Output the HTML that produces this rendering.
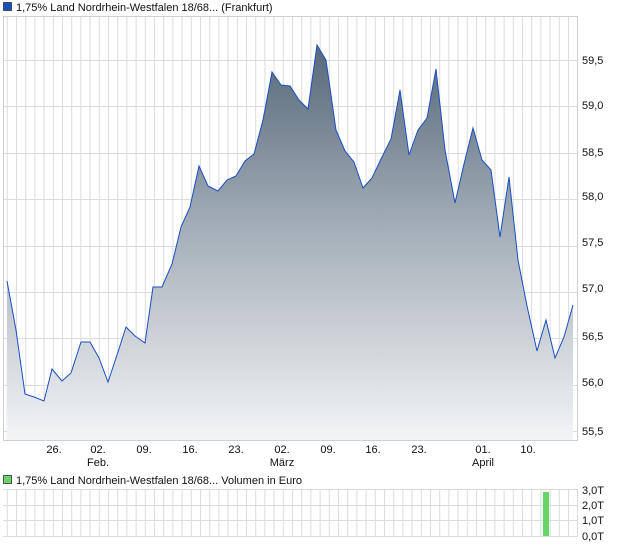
<!DOCTYPE html>
<html><head><meta charset="utf-8"><style>
html,body{margin:0;padding:0;background:#fff;}
svg{display:block;font-family:"Liberation Sans",sans-serif;}
</style></head><body>
<svg width="620" height="546" viewBox="0 0 620 546" xmlns="http://www.w3.org/2000/svg">
<defs>
<pattern id="vg" x="6.8" y="0" width="9.2" height="600" patternUnits="userSpaceOnUse">
<rect x="0" y="0" width="1" height="600" fill="#dcdcdc"/>
</pattern>
<linearGradient id="fg" x1="0" y1="0" x2="0" y2="1">
<stop offset="0" stop-color="#56687a"/>
<stop offset="0.5" stop-color="#a9b3bc"/>
<stop offset="1" stop-color="#f3f4f6"/>
</linearGradient>
</defs>
<rect x="3" y="16" width="575" height="425" fill="url(#vg)"/>
<g stroke="#dcdcdc" stroke-width="1">
<line x1="3" y1="60.5" x2="578" y2="60.5"/>
<line x1="3" y1="106.5" x2="578" y2="106.5"/>
<line x1="3" y1="153.5" x2="578" y2="153.5"/>
<line x1="3" y1="199.5" x2="578" y2="199.5"/>
<line x1="3" y1="246.5" x2="578" y2="246.5"/>
<line x1="3" y1="292.5" x2="578" y2="292.5"/>
<line x1="3" y1="338.5" x2="578" y2="338.5"/>
<line x1="3" y1="385.5" x2="578" y2="385.5"/>
<line x1="3" y1="431.5" x2="578" y2="431.5"/>
</g>
<rect x="3.5" y="16.5" width="574" height="424" fill="none" stroke="#cfcfcf"/>
<polygon fill="url(#fg)" points="7,281 16,330 25,394 34,397 44,401 52,369 62,381 71,373 81,342 90,342 99,358 108,382 117,355 126,327 135,336 145,343 153,287 162,287 172,264 181,227 190,207 199,166 208,186 218,191 227,180 236,176 245,161 254,154 263,120 272,72 281,85 290,86 299,100 308,109 317,45 326,60 336,130 345,151 354,162 363,188 372,178 381,159 391,139 400,90 409,155 418,130 427,118 436,69 445,150 455,203 464,164 473,128 482,160 491,170 500,237 509,177 518,260 527,306 537,351 546,320 555,358 564,337 573,305 573,440 7,440"/>
<polyline fill="none" stroke="#1a4fc0" stroke-width="1" points="7,281 16,330 25,394 34,397 44,401 52,369 62,381 71,373 81,342 90,342 99,358 108,382 117,355 126,327 135,336 145,343 153,287 162,287 172,264 181,227 190,207 199,166 208,186 218,191 227,180 236,176 245,161 254,154 263,120 272,72 281,85 290,86 299,100 308,109 317,45 326,60 336,130 345,151 354,162 363,188 372,178 381,159 391,139 400,90 409,155 418,130 427,118 436,69 445,150 455,203 464,164 473,128 482,160 491,170 500,237 509,177 518,260 527,306 537,351 546,320 555,358 564,337 573,305"/>
<rect x="3.5" y="2.5" width="8" height="8" fill="#1a4fc0" stroke="#333" stroke-width="0.8"/>
<text x="16" y="11" font-size="11" fill="#111">1,75% Land Nordrhein-Westfalen 18/68... (Frankfurt)</text>
<g font-size="11" fill="#111">
<text x="582" y="64">59,5</text>
<text x="582" y="109">59,0</text>
<text x="582" y="156">58,5</text>
<text x="582" y="200">58,0</text>
<text x="582" y="246">57,5</text>
<text x="582" y="292">57,0</text>
<text x="582" y="340">56,5</text>
<text x="582" y="386">56,0</text>
<text x="582" y="435">55,5</text>
</g>
<g font-size="11" fill="#111" text-anchor="middle">
<text x="54" y="453">26.</text>
<text x="98" y="453">02.</text>
<text x="98" y="466">Feb.</text>
<text x="144" y="453">09.</text>
<text x="190" y="453">16.</text>
<text x="236" y="453">23.</text>
<text x="282" y="453">02.</text>
<text x="282" y="466">März</text>
<text x="328" y="453">09.</text>
<text x="373" y="453">16.</text>
<text x="419" y="453">23.</text>
<text x="483" y="453">01.</text>
<text x="483" y="466">April</text>
<text x="528" y="453">10.</text>
</g>
<rect x="3.5" y="475.5" width="8" height="8" fill="#66d466" stroke="#333" stroke-width="0.8"/>
<text x="16" y="484" font-size="11" fill="#111">1,75% Land Nordrhein-Westfalen 18/68... Volumen in Euro</text>
<rect x="3" y="489" width="575" height="47" fill="url(#vg)"/>
<g stroke="#dcdcdc">
<line x1="3" y1="489.5" x2="578" y2="489.5"/>
<line x1="3" y1="505.5" x2="578" y2="505.5"/>
<line x1="3" y1="520.5" x2="578" y2="520.5"/>
<line x1="3" y1="536.5" x2="578" y2="536.5"/>
<line x1="577.5" y1="489" x2="577.5" y2="537"/>
</g>
<rect x="543" y="492" width="6" height="44" fill="#66d466"/>
<g font-size="11" fill="#111">
<text x="582" y="494">3,0T</text>
<text x="582" y="509">2,0T</text>
<text x="582" y="524">1,0T</text>
<text x="582" y="540">0,0T</text>
</g>
</svg>
</body></html>
